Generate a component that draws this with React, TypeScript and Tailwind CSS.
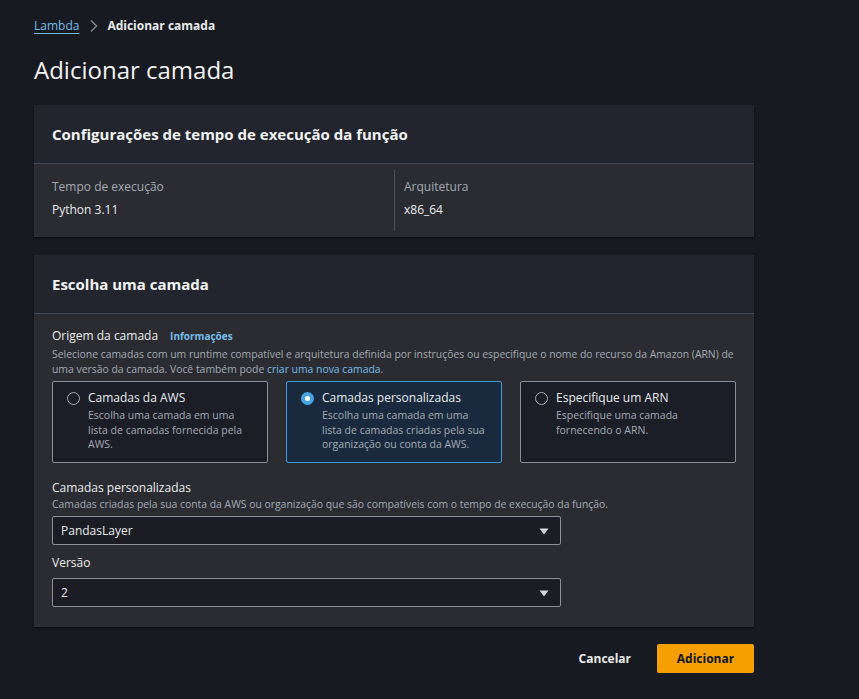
import React, { useState } from 'react';

const font = { fontFamily: '"Open Sans", "Noto Sans", sans-serif' };

type Option = { id: string; title: string; desc: string };

const options: Option[] = [
  {
    id: 'aws',
    title: 'Camadas da AWS',
    desc: 'Escolha uma camada em uma lista de camadas fornecida pela AWS.',
  },
  {
    id: 'custom',
    title: 'Camadas personalizadas',
    desc: 'Escolha uma camada em uma lista de camadas criadas pela sua organização ou conta da AWS.',
  },
  {
    id: 'arn',
    title: 'Especifique um ARN',
    desc: 'Especifique uma camada fornecendo o ARN.',
  },
];

const Caret = () => (
  <svg width="12" height="12" viewBox="0 0 12 12" className="text-[#d1d5db]">
    <path d="M1.5 3.5h9L6 9.5z" fill="currentColor" />
  </svg>
);

const SelectBox: React.FC<{ value: string }> = ({ value }) => (
  <div className="flex h-[29px] w-[509px] items-center justify-between rounded-[2px] border border-[#8d9199] bg-[#1b1c24] pl-[8px] pr-[10px] text-[12px] text-[#e9ebed]">
    <span>{value}</span>
    <Caret />
  </div>
);

export default function App() {
  const [source, setSource] = useState('custom');

  return (
    <div className="min-h-[699px] bg-[#181a21] pl-[34px] pr-[105px] pt-[14px] text-[#e9ebed]" style={font}>
      {/* Breadcrumb */}
      <div className="flex h-[23px] items-center text-[12px]">
        <a className="text-[#75bcea] underline underline-offset-[3px] decoration-[#75bcea]">Lambda</a>
        <svg width="10" height="14" viewBox="0 0 10 14" className="ml-[10px] mr-[8px]">
          <path d="M2 1.5l5.5 5.5L2 12.5" fill="none" stroke="#7d8389" strokeWidth="1.6" />
        </svg>
        <span className="font-bold text-[#e9ebed]">Adicionar camada</span>
      </div>

      <h1 className="mt-[18px] text-[24px] leading-[30px] text-[#f2f3f3]">Adicionar camada</h1>

      {/* Runtime settings */}
      <section className="mt-[20px] shadow-[0_1px_2px_rgba(0,0,0,0.5)]">
        <div className="flex h-[59px] items-center border-b border-[#414750] bg-[#22252d] px-[18px]">
          <h2 className="text-[15px] font-bold text-[#f2f3f3]">Configurações de tempo de execução da função</h2>
        </div>
        <div className="grid h-[73px] grid-cols-2 bg-[#2a2c32] px-[18px] py-[6px]">
          <div className="flex flex-col pt-[7px]">
            <span className="text-[12px] leading-[20px] text-[#a3aab3]">Tempo de execução</span>
            <span className="mt-[3px] text-[12px] leading-[20px] text-[#eaeded]">Python 3.11</span>
          </div>
          <div className="flex flex-col border-l border-[#4b515a] pl-[9px] pt-[7px]">
            <span className="text-[12px] leading-[20px] text-[#a3aab3]">Arquitetura</span>
            <span className="mt-[3px] text-[12px] leading-[20px] text-[#eaeded]">x86_64</span>
          </div>
        </div>
      </section>

      {/* Choose layer */}
      <section className="mt-[18px] shadow-[0_1px_2px_rgba(0,0,0,0.5)]">
        <div className="flex h-[59px] items-center border-b border-[#414750] bg-[#22252d] px-[18px]">
          <h2 className="text-[15px] font-bold text-[#f2f3f3]">Escolha uma camada</h2>
        </div>
        <div className="bg-[#2a2c32] px-[18px] pb-[20px] pt-[13px]">
          <div className="flex items-center gap-[12px]">
            <span className="text-[12px] leading-[18px] text-[#eaeded]">Origem da camada</span>
            <a className="text-[10px] font-bold text-[#75bcea]">Informações</a>
          </div>
          <p className="mt-[2px] text-[10.4px] leading-[15px] text-[#a3aab3]">
            Selecione camadas com um runtime compatível e arquitetura definida por instruções ou especifique o nome do recurso da Amazon (ARN) de uma versão da camada. Você também pode{' '}
            <a className="text-[#75bcea]">criar uma nova camada</a>.
          </p>

          <div className="mt-[4px] grid grid-cols-3 gap-[18px]">
            {options.map((o) => {
              const active = source === o.id;
              return (
                <button
                  key={o.id}
                  onClick={() => setSource(o.id)}
                  className={`flex h-[82px] gap-[8px] rounded-[2px] border px-[14px] pt-[7px] text-left ${
                    active ? 'border-[#3d9bd6] bg-[#192a3e]' : 'border-[#8a8e96] bg-[#1b1d27]'
                  }`}
                >
                  {active ? (
                    <span className="mt-[3px] flex h-[13px] w-[13px] shrink-0 items-center justify-center rounded-full bg-[#44a5e2]">
                      <span className="h-[5px] w-[5px] rounded-full bg-white" />
                    </span>
                  ) : (
                    <span className="mt-[3px] h-[13px] w-[13px] shrink-0 rounded-full border border-[#a3a8b0]" />
                  )}
                  <span className="flex flex-col">
                    <span className="text-[12px] leading-[18px] text-[#eaeded]">{o.title}</span>
                    <span className="mt-[1px] text-[10.5px] leading-[14.5px] text-[#a3aab3]">{o.desc}</span>
                  </span>
                </button>
              );
            })}
          </div>

          <div className="mt-[16px] text-[12px] leading-[18px] text-[#eaeded]">Camadas personalizadas</div>
          <p className="mt-[0px] text-[10.4px] leading-[15px] text-[#a3aab3]">
            Camadas criadas pela sua conta da AWS ou organização que são compatíveis com o tempo de execução da função.
          </p>
          <div className="mt-[4px]">
            <SelectBox value="PandasLayer" />
          </div>

          <div className="mt-[9px] text-[12px] leading-[18px] text-[#eaeded]">Versão</div>
          <div className="mt-[6px]">
            <SelectBox value="2" />
          </div>
        </div>
      </section>

      {/* Actions */}
      <div className="mt-[17px] flex items-center justify-end gap-[26px]">
        <button className="text-[12px] font-bold text-[#e9ebed]">Cancelar</button>
        <button className="h-[29px] w-[97px] rounded-[2px] bg-[#f5a000] text-[12px] font-bold text-[#0f141a]">
          Adicionar
        </button>
      </div>
    </div>
  );
}
